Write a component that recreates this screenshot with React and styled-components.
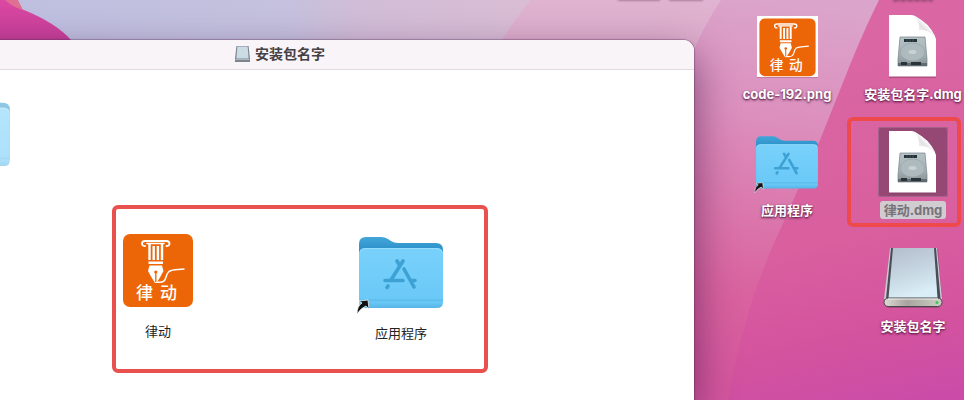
import React from "react";
import styled, { createGlobalStyle, css } from "styled-components";

const Global = createGlobalStyle`
  *, *::before, *::after { box-sizing: border-box; }
  body { margin: 0; overflow: hidden; font-family: Inter, "Noto Sans CJK SC", sans-serif; }
`;

const Desktop = styled.main`
  position: relative;
  display: flex;
  align-items: stretch;
  min-height: 100vh;
  overflow: hidden;
  background: #d65f9f;
`;

const Backdrop = styled.svg`
  position: absolute;
  inset: 0;
  width: 100%;
  height: 100%;
`;

const Window = styled.section`
  position: relative;
  flex: 1;
  min-width: 0;
  display: flex;
  flex-direction: column;
  margin: 40px 0 0 -134px;
  border-top-right-radius: 11px;
  background: #ffffff;
  box-shadow: 0 0 1px 1px rgba(80, 40, 80, 0.35), 0 16px 40px rgba(60, 20, 70, 0.6);
`;

const TitleBar = styled.header`
  display: flex;
  align-items: center;
  justify-content: center;
  gap: 5px;
  height: 30px;
  padding-bottom: 1px;
  border-bottom: 1px solid #e3dae1;
  border-top-right-radius: 11px;
  background: #f9f4f8;
`;

const Title = styled.h1`
  margin: 0;
  font-size: 14px;
  line-height: 20px;
  font-weight: 700;
  color: #454247;
`;

const WindowBody = styled.div`
  padding-top: 27px;
`;

const FadedFolder = styled.div`
  width: 82px;
  height: 77px;
  margin-left: 62px;
  opacity: 0.55;
`;

const Highlight = styled.div`
  display: flex;
  align-items: flex-start;
  justify-content: space-between;
  height: 168px;
  margin: 31px 206px 0 246px;
  padding: 25px 41px 0 0;
  border: 4px solid #e8514d;
  border-radius: 6px;
`;

const Item = styled.button`
  display: flex;
  flex-direction: column;
  align-items: center;
  padding: 0;
  border: 0;
  background: none;
  font-family: inherit;
`;

const WindowItem = styled(Item)`
  gap: 13px;
  width: 84px;
  color: #222222;
  font-size: 13px;
  line-height: 20px;
`;

const IconGrid = styled.nav`
  position: relative;
  display: grid;
  grid-template-columns: 126px 102px;
  grid-auto-rows: 116px;
  column-gap: 12px;
  width: 270px;
  padding: 11px 0 0 30px;
`;

const DesktopItem = styled(Item)`
  position: relative;
  gap: 4px;
  height: 92px;
  grid-column: ${(p) => p.$column};
`;

const Tile = styled.span`
  display: grid;
  place-items: center;
  width: 70px;
  height: 70px;
  border-radius: 3px;
  ${(p) => p.$selected && css`
    background: #954873;
    box-shadow: inset 0 0 0 1px #a5638b;
  `}
`;

const Label = styled.span`
  height: 18px;
  padding: 0 4px;
  border-radius: 3px;
  font-size: 13px;
  line-height: 18px;
  font-weight: 700;
  white-space: nowrap;
  color: #ffffff;
  text-shadow: 0 1px 2px rgba(70, 10, 50, 0.85), 0 1px 3px rgba(70, 10, 50, 0.4);
  ${(p) => p.$selected && css`
    background: #d0cccf;
    color: #77737a;
    text-shadow: none;
  `}
`;

const Marker = styled.span`
  position: absolute;
  inset: -10px 3px -8px -15px;
  border: 4px solid #ee4a4c;
  border-radius: 6px;
`;

const Drawing = styled.svg`
  display: block;
  flex: none;
  overflow: visible;
`;

function Wallpaper() {
  return (
    <Backdrop viewBox="0 0 964 400" preserveAspectRatio="none" aria-hidden="true">
      <defs>
        <linearGradient id="sky" x1="0" x2="1">
          <stop offset="0" stopColor="#bebfe0" />
          <stop offset="0.3" stopColor="#c5c1de" />
          <stop offset="0.37" stopColor="#d1bdd7" />
          <stop offset="0.55" stopColor="#dabdd5" />
        </linearGradient>
        <linearGradient id="band" x1="0" y1="0" x2="0" y2="1">
          <stop offset="0" stopColor="#dfb4d0" />
          <stop offset="0.3" stopColor="#dca0c5" />
          <stop offset="1" stopColor="#d366a3" />
        </linearGradient>
        <linearGradient id="band2" gradientUnits="userSpaceOnUse" x1="790" y1="0" x2="740" y2="390">
          <stop offset="0" stopColor="#dba5cb" />
          <stop offset="0.3" stopColor="#dc8fbd" />
          <stop offset="0.55" stopColor="#db77ac" />
          <stop offset="0.75" stopColor="#d9639f" />
          <stop offset="1" stopColor="#d4569d" />
        </linearGradient>
        <linearGradient id="rose" gradientUnits="userSpaceOnUse" x1="840" y1="60" x2="920" y2="400">
          <stop offset="0" stopColor="#da66a3" />
          <stop offset="0.5" stopColor="#d95f9f" />
          <stop offset="0.78" stopColor="#d4539e" />
          <stop offset="1" stopColor="#cb4ca8" />
        </linearGradient>
        <linearGradient id="petal" x1="0" y1="0" x2="0" y2="1">
          <stop offset="0" stopColor="#db48a3" />
          <stop offset="1" stopColor="#c63f98" />
        </linearGradient>
        <linearGradient id="folderFront" x1="0" y1="0" x2="0" y2="1">
          <stop offset="0" stopColor="#78d1fa" />
          <stop offset="0.84" stopColor="#6bc9f8" />
          <stop offset="0.87" stopColor="#5ebce9" />
          <stop offset="0.9" stopColor="#6bc9f7" />
          <stop offset="1" stopColor="#56b5e5" />
        </linearGradient>
        <linearGradient id="folderBack" x1="0" y1="0" x2="0" y2="1">
          <stop offset="0" stopColor="#42a6da" />
          <stop offset="0.3" stopColor="#2387c2" />
        </linearGradient>
        <linearGradient id="metal" x1="0" y1="0" x2="0.3" y2="1">
          <stop offset="0" stopColor="#b4bdcb" />
          <stop offset="0.5" stopColor="#c3d3df" />
          <stop offset="1" stopColor="#d9eef6" />
        </linearGradient>
        <linearGradient id="lip" x1="0" x2="1">
          <stop offset="0" stopColor="#ddd9d5" />
          <stop offset="0.4" stopColor="#aaa39f" />
          <stop offset="1" stopColor="#c9d0c3" />
        </linearGradient>
        <linearGradient id="disk" x1="0" y1="0" x2="0" y2="1">
          <stop offset="0" stopColor="#b5c2c6" />
          <stop offset="0.55" stopColor="#a6b2b6" />
          <stop offset="1" stopColor="#879397" />
        </linearGradient>
        <linearGradient id="fold" x1="0" y1="1" x2="1" y2="0">
          <stop offset="0" stopColor="#ffffff" />
          <stop offset="0.45" stopColor="#e4e1e4" />
          <stop offset="0.6" stopColor="#ffffff" />
        </linearGradient>
        <filter id="soft" x="-20%" y="-5" width="140%" height="10" filterUnits="userSpaceOnUse">
          <feGaussianBlur stdDeviation="1" />
        </filter>
      </defs>
      <rect width="964" height="400" fill="url(#sky)" />
      <path d="M531 0Q520 12 502 40L430 400H964V0Z" fill="url(#band)" />
      <path d="M721 0Q702 28 690 60L600 400H964V0Z" fill="url(#band2)" />
      <path d="M879 0Q860 38 840 90L820 140L780 230Q762 268 749 310Q736 355 728 400H964V0Z" fill="url(#rose)" />
      <path d="M0 0H18L23 10L0 6Z" fill="#df7091" />
      <path d="M0 0H5Q14 8 24 10Q56 23 71 40H0Z" fill="url(#petal)" />
      <g fill="none" stroke="#66394f" strokeWidth="3" filter="url(#soft)" opacity="0.6">
        <path d="M618 -1H660M669 -1H703" />
        <path d="M893 0H933" strokeDasharray="6 1" />
      </g>
    </Backdrop>
  );
}

function Brand({ width, height, viewBox, paper }) {
  return (
    <Drawing width={width} height={height} viewBox={viewBox} preserveAspectRatio="none" aria-hidden="true">
      {paper && (
        <>
          <rect x="-3" y="-2" width="76" height="77" fill="#8c3b69" opacity="0.4" />
          <rect x="-3" y="-3" width="76" height="77" fill="#fff" />
        </>
      )}
      <rect width="70" height="73" rx="7" fill="#ec6608" />
      <g fill="none" stroke="#fff" strokeLinecap="round">
        <path d="M22 12C18 12.500 18 7 22 7H43.500C47.500 7 47.500 12.500 43.500 12" strokeWidth="1.800" />
        <path d="M24 9.500H41" strokeWidth="1.600" />
        <path d="M26.500 10V26M30.700 12V26M34.900 12V26M39 10V26" strokeWidth="2.400" strokeLinecap="butt" />
        <path d="M33 48C46 50 41 41 46 37.500C50 35 55 36 61 35" strokeWidth="1.500" />
      </g>
      <path d="M25.500 27.500H40V30H25.500ZM26.500 31.500H39L40.500 37Q38 42 33.500 49H32Q27.500 42 25 37Z" fill="#fff" />
      <path d="M32.800 38V48" stroke="#ec6608" strokeWidth="1.300" />
      <circle cx="32.800" cy="38" r="1.600" fill="#ec6608" />
      <text x="13" y="65" fontSize="17" fontWeight="500" fontFamily='"Noto Sans CJK SC", sans-serif' fill="#fff">律</text>
      <text x="37" y="65" fontSize="17" fontWeight="500" fontFamily='"Noto Sans CJK SC", sans-serif' fill="#fff">动</text>
    </Drawing>
  );
}

function Folder({ width, height, plain }) {
  return (
    <Drawing width={width} height={height} viewBox={plain ? "0 0 84 72" : "0 -3 84 76"} aria-hidden="true">
      <path d="M0 7Q0 0 7 0H22Q26 0 29 2L32 4Q35 6 39 6H77Q84 6 84 13V64H0Z" fill="url(#folderBack)" />
      <path d="M0 17Q0 11 6 11H78Q84 11 84 17V65Q84 71 78 71H6Q0 71 0 65Z" fill="url(#folderFront)" />
      <path d="M1 16Q1 12 6 11.500H78Q83 12 83 16" fill="none" stroke="#95dcfc" />
      {!plain && (
        <>
          <g fill="none" stroke="#3da2d3" strokeWidth="3.600" strokeLinecap="round">
            <path d="M44 24L32 43M38 24L41 29M45 32L55 50M26 43.500H44M53 43.500H56M29 49L28 50.500" />
          </g>
          <path d="M-2 77Q-2 69 3 66L0 64L9 63L10 72L7 69Q2 71 -2 77Z" fill="#111" stroke="#eef5f8" strokeWidth="0.800" />
        </>
      )}
    </Drawing>
  );
}

function DiskImage() {
  return (
    <Drawing width="48" height="62" viewBox="0 0 48 62" aria-hidden="true">
      <path d="M0 1H23Q31 3 37 9Q45 17 47 25V63H0Z" fill="#7d3860" opacity="0.5" />
      <path d="M0 0H23Q28 1 34 7Q45 16 47 24V61.500H0Z" fill="#fff" />
      <path d="M25 1Q31 6 30 15Q40 14 46 22Q41 8 25 1Z" fill="url(#fold)" />
      <path d="M11 22H36L38 44V51H9V44Z" fill="url(#disk)" stroke="#778286" strokeWidth="0.700" />
      <ellipse cx="23.500" cy="37" rx="12" ry="9" fill="#afbabe" stroke="#99a7ac" strokeWidth="0.800" />
      <ellipse cx="23.500" cy="37" rx="4" ry="2" fill="#c8d2d4" />
      <path d="M15 24H28V27H15Z" fill="#263039" />
      <path d="M18 24V27M21 24V27M24 24V27" stroke="#66747a" strokeWidth="0.500" />
      <path d="M9 48H38V51H9Z" fill="#5f6b70" />
      <path d="M12 47H18V50H12ZM22 47H32V50H22Z" fill="#2b3339" />
    </Drawing>
  );
}

function Drive() {
  return (
    <Drawing width="60" height="62" viewBox="0 0 60 62" aria-hidden="true">
      <path d="M7 2H55L59 54Q59 61 54 61H6Q1 60 1 54Z" fill="#753b5c" opacity="0.5" />
      <path d="M7 1H54L59 52H1Z" fill="#c9ccd3" />
      <path d="M8 1H53L57.500 52H3Z" fill="#4a4d58" />
      <path d="M10 1H51L54.500 51H5.500Z" fill="url(#metal)" />
      <rect x="1" y="51" width="58" height="8.500" rx="4.200" fill="url(#lip)" stroke="#47474b" />
      <path d="M5 52H55" stroke="#eff2ef" />
      <circle cx="54" cy="55.500" r="1.500" fill="#48c559" />
    </Drawing>
  );
}

function MiniDrive() {
  return (
    <Drawing width="15" height="16" viewBox="0 0 16 16" preserveAspectRatio="none" aria-hidden="true">
      <path d="M1.500 0H14.500L16 13V16H0V13Z" fill="#7c858d" />
      <path d="M2.500 0.500H13.500L14.500 12.500H1.500Z" fill="#cbdce5" />
      <path d="M0.500 13.500H15.500" stroke="#b2b8bf" />
    </Drawing>
  );
}

function DesktopIcon({ name, column, selected, children }) {
  return (
    <DesktopItem type="button" $column={column}>
      <Tile $selected={selected}>{children}</Tile>
      <Label $selected={selected}>{name}</Label>
      {selected && <Marker />}
    </DesktopItem>
  );
}

export default function App() {
  return (
    <>
      <Global />
      <Desktop>
        <Wallpaper />
        <Window>
          <TitleBar>
            <MiniDrive />
            <Title>安装包名字</Title>
          </TitleBar>
          <WindowBody>
            <FadedFolder>
              <Folder width={82} height={70} plain />
            </FadedFolder>
            <Highlight>
              <WindowItem type="button">
                <Brand width={70} height={74} viewBox="0 0 70 74" />
                <span>律动</span>
              </WindowItem>
              <WindowItem type="button">
                <Folder width={84} height={76} />
                <span>应用程序</span>
              </WindowItem>
            </Highlight>
          </WindowBody>
        </Window>
        <IconGrid aria-label="桌面">
          <DesktopIcon name="code-192.png" column={1}>
            <Brand width={61} height={61} viewBox="-3 -3 76 77" paper />
          </DesktopIcon>
          <DesktopIcon name="安装包名字.dmg" column={2}>
            <DiskImage />
          </DesktopIcon>
          <DesktopIcon name="应用程序" column={1}>
            <Folder width={62} height={56} />
          </DesktopIcon>
          <DesktopIcon name="律动.dmg" column={2} selected>
            <DiskImage />
          </DesktopIcon>
          <DesktopIcon name="安装包名字" column={2}>
            <Drive />
          </DesktopIcon>
        </IconGrid>
      </Desktop>
    </>
  );
}
